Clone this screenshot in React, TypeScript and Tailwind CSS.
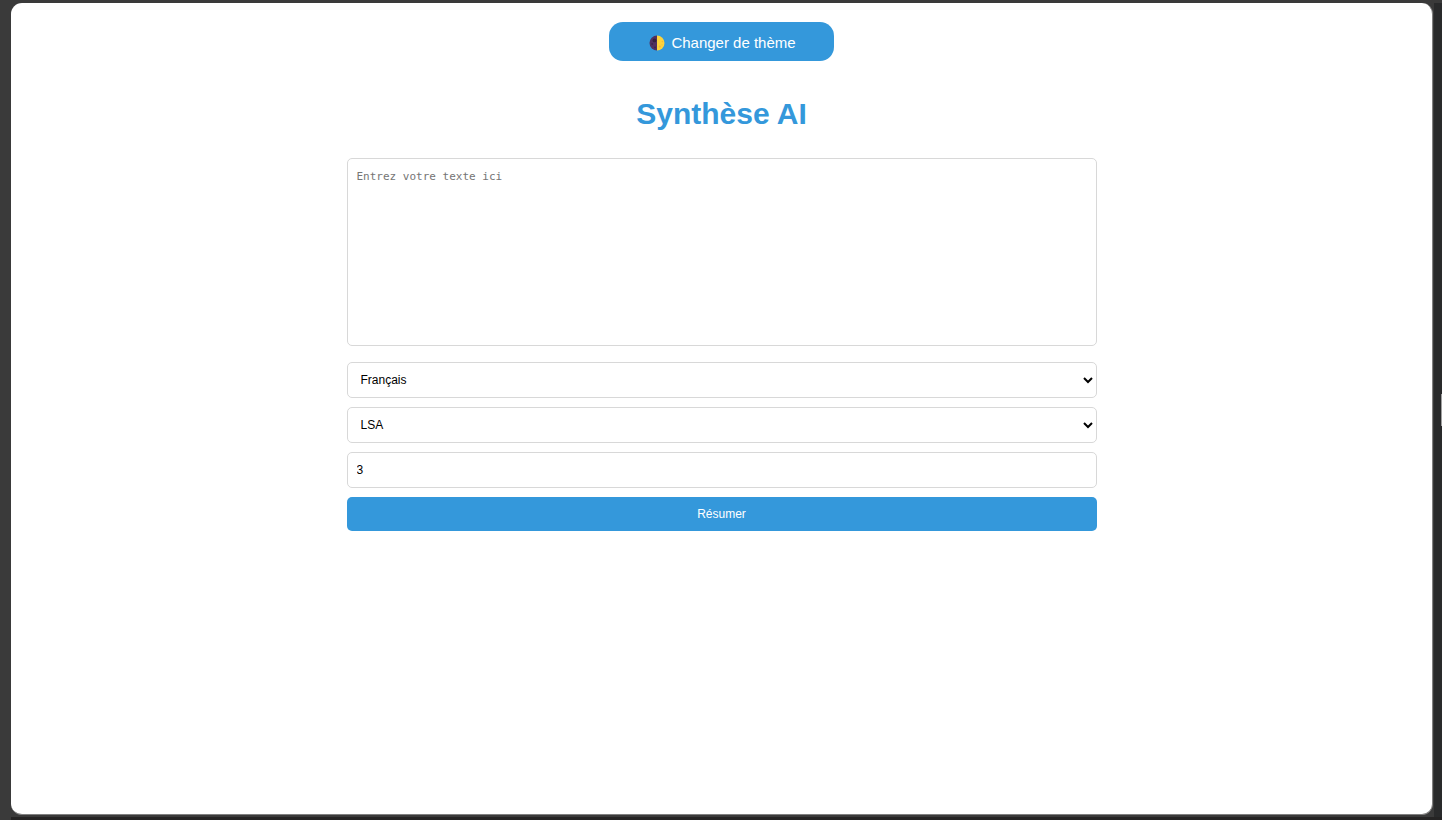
import { useState } from "react";

const fieldClass =
  "block w-full rounded-[5px] border border-[#d8d8d8] bg-white font-['Liberation_Sans',Arial,sans-serif] text-xs text-black outline-none focus:border-[#3498db]";

function HalfMoon() {
  return (
    <svg viewBox="0 0 16 16" className="size-4" aria-hidden="true">
      <path d="M8 .5a7.5 7.5 0 0 0 0 15Z" fill="#50305f" />
      <path d="M8 .5a7.5 7.5 0 0 1 0 15Z" fill="#fdd33c" />
      <circle cx="5.5" cy="5.4" r="1.9" fill="#35203f" />
      <circle cx="3.2" cy="9" r="0.9" fill="#3d2549" />
      <circle cx="6" cy="12.4" r="0.9" fill="#3d2549" />
      <circle cx="10.8" cy="11.6" r="1.1" fill="#f3b93a" />
      <circle cx="13.4" cy="6.6" r="0.8" fill="#f3b93a" />
      <circle cx="13" cy="9.8" r="0.6" fill="#f3b93a" />
    </svg>
  );
}

export default function App() {
  const [text, setText] = useState("");
  const [language, setLanguage] = useState("fr");
  const [method, setMethod] = useState("lsa");
  const [count, setCount] = useState("3");

  return (
    <div className="flex min-h-screen flex-col bg-[#3a3a3a] pt-[3px] font-['Liberation_Sans',Arial,sans-serif]">
      <div className="flex grow">
        <div className="flex grow pr-px pb-0.5 pl-[11px]">
          <main className="flex grow flex-col items-center rounded-[11px] border-r border-b border-[#808080] bg-white px-4 pt-[19px]">
            <button
              type="button"
              className="flex h-[39px] w-[225px] cursor-pointer items-center justify-center gap-1.5 rounded-[14px] bg-[#3498db] pt-[3px] pl-0.5 text-[15px] text-white"
            >
              <HalfMoon />
              <span>Changer de thème</span>
            </button>
            <h1 className="mt-[33px] text-[30px] leading-10 font-bold text-[#3498db]">Synthèse AI</h1>
            <form className="mt-6 flex w-full max-w-[750px] flex-col gap-[9px]" onSubmit={(e) => e.preventDefault()}>
              <textarea
                aria-label="Texte à résumer"
                placeholder="Entrez votre texte ici"
                value={text}
                onChange={(e) => setText(e.target.value)}
                className="mb-[7px] block h-[188px] w-full resize-none rounded-[5px] border border-[#d8d8d8] bg-white px-[9px] py-2.5 font-['DejaVu_Sans_Mono','Liberation_Mono',monospace] text-[11px] leading-4 text-black outline-none placeholder:text-[#757575] focus:border-[#3498db]"
              />
              <select
                aria-label="Langue"
                value={language}
                onChange={(e) => setLanguage(e.target.value)}
                className={`${fieldClass} h-9 px-[9px]`}
              >
                <option value="fr">Français</option>
                <option value="en">Anglais</option>
              </select>
              <select
                aria-label="Méthode"
                value={method}
                onChange={(e) => setMethod(e.target.value)}
                className={`${fieldClass} h-9 px-[9px]`}
              >
                <option value="lsa">LSA</option>
                <option value="luhn">Luhn</option>
              </select>
              <input
                type="number"
                aria-label="Nombre de phrases"
                value={count}
                onChange={(e) => setCount(e.target.value)}
                className={`${fieldClass} h-9 px-[9px]`}
              />
              <button
                type="submit"
                className="h-[34px] w-full cursor-pointer rounded-[5px] bg-[#3498db] text-xs text-white"
              >
                Résumer
              </button>
            </form>
          </main>
        </div>
        <div className="flex w-2 items-center justify-end bg-[#292a2b]">
          <div className="h-8 w-px bg-[#a0a0a0]" />
        </div>
      </div>
      <div className="flex h-[3px] pl-[11px]">
        <div className="grow bg-[#252424]" />
      </div>
    </div>
  );
}
